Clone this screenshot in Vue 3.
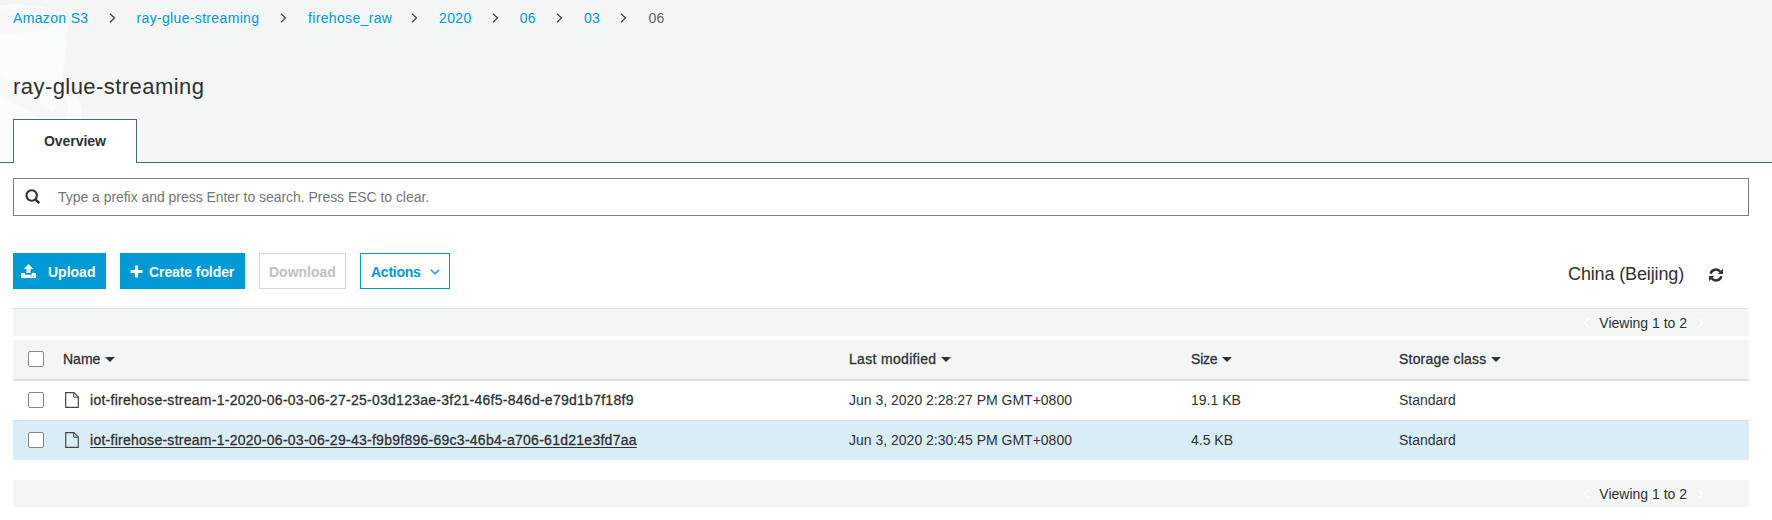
<script setup>
const crumbs = ['Amazon S3', 'ray-glue-streaming', 'firehose_raw', '2020', '06', '03', '06']
const rows = [
  { name: 'iot-firehose-stream-1-2020-06-03-06-27-25-03d123ae-3f21-46f5-846d-e79d1b7f18f9', date: 'Jun 3, 2020 2:28:27 PM GMT+0800', size: '19.1 KB', cls: 'Standard' },
  { name: 'iot-firehose-stream-1-2020-06-03-06-29-43-f9b9f896-69c3-46b4-a706-61d21e3fd7aa', date: 'Jun 3, 2020 2:30:45 PM GMT+0800', size: '4.5 KB', cls: 'Standard', active: true },
]
const heads = [['Name', 'h-name'], ['Last modified', 'h-date'], ['Size', 'h-size'], ['Storage class', 'h-class']]
</script>

<template>
  <div class="page">
    <header class="top">
      <svg class="bucket" width="100" height="162" viewBox="0 0 100 162">
        <path d="M0 5C28 3 55 6 69 17L62 84C76 92 83 104 82 119V130H13V162H0Z" fill="#fafbfb" />
        <path d="M0 9C28 8 52 13 57 23C48 31 26 34 0 33Z" fill="#f7f9f9" />
        <path d="M0 77L53 112L61 96C69 101 70 110 66 119H42L0 94Z" fill="#f6f8f8" />
      </svg>
      <nav class="crumbs">
        <span v-for="(c, i) in crumbs" :key="i" class="crumb">
          <a :class="{ current: i === crumbs.length - 1 }">{{ c }}</a>
          <svg v-if="i < crumbs.length - 1" class="sep" width="7" height="10" viewBox="0 0 7 10"><path d="M1 .8L5.5 5L1 9.2" fill="none" stroke="#444" stroke-width="1.3" /></svg>
        </span>
      </nav>
      <h1>ray-glue-streaming</h1>
      <div class="tab"><span>Overview</span></div>
    </header>
    <main>
      <div class="search">
        <svg width="16" height="16" viewBox="0 0 16 16"><circle cx="6.7" cy="6.5" r="5.2" fill="none" stroke="#2f3133" stroke-width="2.1" /><path d="M10.4 10.3L14.3 14.2" stroke="#2f3133" stroke-width="2.6" /></svg>
        <span>Type a prefix and press Enter to search. Press ESC to clear.</span>
      </div>
      <div class="tools">
        <button class="upload">
          <svg width="15" height="14" viewBox="0 0 15 14"><path d="M7.5 0L12.3 5H9.5V9H5.5V5H2.7Z" fill="#fff" /><path d="M0 9H4.2V10.8H10.8V9H15V14H0ZM9.6 11.7V12.7H10.6V11.7ZM12.1 11.7V12.7H13.1V11.7Z" fill="#fff" fill-rule="evenodd" /></svg>
          <span>Upload</span>
        </button>
        <button class="create">
          <svg width="13" height="13" viewBox="0 0 13 13"><path d="M6.5 .5V12.5M.5 6.5H12.5" stroke="#fff" stroke-width="3.2" /></svg>
          <span>Create folder</span>
        </button>
        <button class="download"><span>Download</span></button>
        <button class="actions">
          <span>Actions</span>
          <svg width="10" height="6" viewBox="0 0 10 6"><path d="M.8 .8L5 4.8L9.2 .8" fill="none" stroke="#0099d6" stroke-width="1.3" /></svg>
        </button>
        <span class="region">China (Beijing)</span>
        <svg class="refresh" width="14" height="14" viewBox="0 0 14 14"><g fill="none" stroke="#2f3133" stroke-width="2.5"><path d="M1.6 5.7C2.7 1 8.5 .3 11.4 3.7" /><path d="M12.4 8.3C11.3 13 5.5 13.7 2.6 10.3" /></g><path d="M14 .8V6H8.8ZM0 13.2V8H5.2Z" fill="#2f3133" /></svg>
      </div>
      <div class="pager first">
        <svg width="7" height="10" viewBox="0 0 7 10"><path d="M5.5 .8L1.2 5L5.5 9.2" /></svg>
        <span>Viewing 1 to 2</span>
        <svg width="7" height="10" viewBox="0 0 7 10"><path d="M1 .8L5.3 5L1 9.2" /></svg>
      </div>
      <div class="row head">
        <i class="box"></i>
        <span v-for="h in heads" :key="h[0]" class="th" :class="h[1]"><span>{{ h[0] }}</span><svg width="10" height="5" viewBox="0 0 10 5"><path d="M0 0H10L5 5Z" fill="#2f3133" /></svg></span>
      </div>
      <div v-for="r in rows" :key="r.name" class="row item" :class="{ active: r.active }">
        <i class="box"></i>
        <span class="file">
          <svg width="14" height="16" viewBox="0 0 14 16"><path d="M.7 .6H8.8L13.3 5.1V15.3H.7Z" fill="none" stroke="#444" stroke-width="1.2" /><path d="M8.7 .7V5.2H13.2" fill="none" stroke="#444" stroke-width="1" /></svg>
          <span class="name">{{ r.name }}</span>
        </span>
        <span class="date">{{ r.date }}</span>
        <span class="size">{{ r.size }}</span>
        <span class="cls">{{ r.cls }}</span>
      </div>
      <div class="pager last">
        <svg width="7" height="10" viewBox="0 0 7 10"><path d="M5.5 .8L1.2 5L5.5 9.2" /></svg>
        <span>Viewing 1 to 2</span>
        <svg width="7" height="10" viewBox="0 0 7 10"><path d="M1 .8L5.3 5L1 9.2" /></svg>
      </div>
    </main>
  </div>
</template>

<style>
body { background: #fff; }
</style>
<style scoped>
* { box-sizing: border-box; }
.page { width: 1772px; height: 520px; overflow: hidden; font: 14px/20px "Liberation Sans", Arial, sans-serif; color: #2f3133; white-space: nowrap; background: #fff; }
svg { display: block; flex: none; }
.top { position: relative; height: 163px; background: #f4f6f6; border-bottom: 1px solid #456b7b; padding: 8px 13px 0; }
.bucket { position: absolute; left: 0; top: 0; }
.crumbs { position: relative; display: grid; grid-template-columns: 123.5px 171.5px 131px 80.7px 64.3px 64.5px 40px; height: 20px; letter-spacing: .34px; }
.crumb { display: flex; justify-content: space-between; align-items: center; color: #0099d6; }
.crumb .current { color: #566573; }
.sep { margin-right: 21px; }
h1 { position: relative; margin: 45px 0 0; font-size: 22px; line-height: 28px; font-weight: 400; letter-spacing: .44px; }
.tab { position: relative; margin-top: 18px; width: 124px; height: 44px; border: 1px solid #456b7b; border-bottom: 0; background: #fff; padding: 11px 0 0 30px; font-weight: 700; letter-spacing: -.05px; }
main { padding: 15px 23px 0 13px; }
.search { display: flex; align-items: center; height: 38px; border: 1px solid #808080; padding-left: 11px; color: #757575; letter-spacing: -.04px; }
.search span { margin-left: 17px; }
.tools { display: flex; margin-top: 37px; height: 36px; }
button { display: flex; align-items: center; height: 36px; padding: 0; border: 1px solid #0099d6; margin: 0 14px 0 0; font: 700 14px/20px "Liberation Sans", Arial, sans-serif; color: #fff; background: #0099d6; }
button span { padding-top: 2px; }
.upload { width: 93px; padding-left: 7px; }
.upload span { margin-left: 12px; }
.create { width: 125px; padding-left: 9px; letter-spacing: -.09px; }
.create span { margin-left: 6px; }
.download { width: 87px; padding-left: 9px; background: #fff; color: #c0c0c0; border-color: #d5d5d5; }
.actions { width: 90px; padding-left: 10px; background: #fff; color: #0099d6; letter-spacing: -.25px; }
.actions svg { margin: 2px 0 0 9px; }
.region { margin: 11px 0 0 auto; font-size: 18px; line-height: 20px; letter-spacing: -.14px; }
.refresh { margin: 15px 26px 0 25px; }
.pager { display: flex; align-items: center; justify-content: flex-end; height: 27px; padding-right: 45px; background: #f4f6f6; }
.pager svg { fill: none; stroke: #fff; stroke-width: 1.3; }
.pager span { margin: 0 10px 0 9px; }
.first { height: 28px; margin-top: 19px; border-top: 1px solid #dfe2e2; }
.last { margin-top: 20px; }
.row { display: grid; grid-template-columns: 50px 786px 342px 208px 1fr; align-items: center; padding-bottom: 1px; }
.head { margin-top: 4px; height: 41px; background: #f4f6f6; border-bottom: 2px solid #dcdfdf; }
.item { height: 39px; }
.active { height: 40px; background: #d9edf7; border-top: 1px solid #d8dddf; }
.box { width: 16px; height: 16px; margin-left: 15px; border: 1px solid #888; border-radius: 2px; background: #fff; }
.th { display: flex; align-items: center; -webkit-text-stroke: .3px #2f3133; }
.h-date { letter-spacing: .32px; }
.h-class { letter-spacing: .2px; }
.h-size { letter-spacing: -.2px; }
.th svg { margin-left: 5px; -webkit-text-stroke: 0; }
.file { display: flex; align-items: center; padding-left: 2px; }
.name { margin-left: 11px; line-height: 16px; letter-spacing: .265px; -webkit-text-stroke: .3px #2f3133; }
.active .name { text-decoration: underline; text-underline-offset: 2px; text-decoration-thickness: 1px; }
</style>
